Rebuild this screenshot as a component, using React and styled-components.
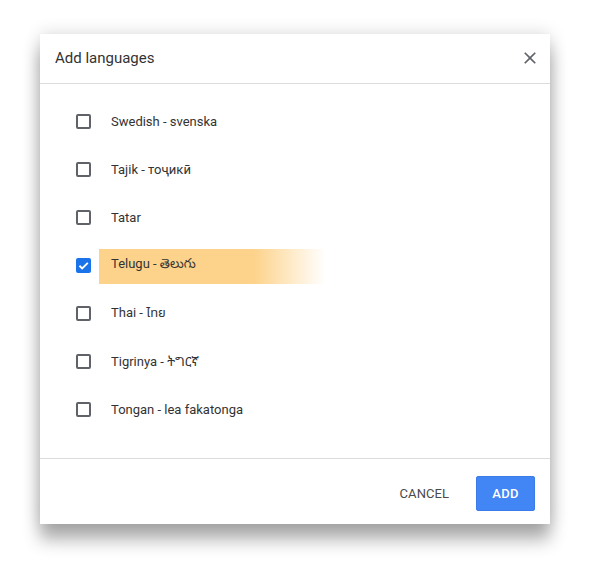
import React from "react";
import styled, { createGlobalStyle } from "styled-components";

const Global = createGlobalStyle`
  html, body { margin: 0; padding: 0; background: #fff; }
  body { font-family: Roboto, "Noto Sans", "Liberation Sans", sans-serif; }
`;

const Page = styled.div`
  width: 593px;
  height: 572px;
  padding: 34px 0 0 40px;
  box-sizing: border-box;
`;

const Dialog = styled.div`
  width: 510px;
  height: 490px;
  background: #fff;
  box-shadow: 0 0 16px rgba(0, 0, 0, 0.16), 0 16px 16px rgba(0, 0, 0, 0.3);
  display: flex;
  flex-direction: column;
`;

const Header = styled.div`
  height: 50px;
  box-sizing: border-box;
  border-bottom: 1px solid #dcdcdc;
  display: flex;
  align-items: center;
  justify-content: space-between;
  padding: 0 10px 2px 15px;
`;

const Title = styled.h2`
  margin: 0;
  font-size: 15px;
  font-weight: 400;
  color: #333;
`;

const CloseButton = styled.button`
  border: 0;
  background: none;
  padding: 0;
  width: 20px;
  height: 20px;
  display: flex;
  align-items: center;
  justify-content: center;
  color: #5f6368;
  cursor: pointer;
`;

const Body = styled.div`
  height: 374px;
  box-sizing: border-box;
  padding-top: 13px;
  display: flex;
  flex-direction: column;
`;

const Row = styled.label`
  height: 48px;
  display: flex;
  align-items: center;
  padding-left: 36px;
  gap: 8px;
`;

const Box = styled.span`
  width: 15px;
  height: 15px;
  box-sizing: border-box;
  border-radius: 2px;
  border: ${(p) => (p.$checked ? "0" : "2px solid #5f6368")};
  background: ${(p) => (p.$checked ? "#1a73e8" : "transparent")};
  display: flex;
  align-items: center;
  justify-content: center;
  flex-shrink: 0;
`;

const Label = styled.span`
  font-size: 13px;
  color: #333;
  padding-left: 12px;
  height: 35px;
  width: 226px;
  box-sizing: border-box;
  display: flex;
  align-items: center;
  margin-top: ${(p) => (p.$highlight ? "3px" : "0")};
  padding-bottom: ${(p) => (p.$highlight ? "3px" : "0")};
  background: ${(p) =>
    p.$highlight
      ? "linear-gradient(to right, #fdd38c 0%, #fdd38c 69%, rgba(253,211,140,0) 100%)"
      : "transparent"};
  font-family: Roboto, "Noto Sans", "Noto Sans Telugu", "Noto Sans Thai", "Noto Sans Ethiopic", sans-serif;
`;

const Footer = styled.div`
  flex: 1;
  border-top: 1px solid #dcdcdc;
  display: flex;
  justify-content: flex-end;
  align-items: flex-start;
  padding: 17px 15px 0 0;
  gap: 11px;
`;

const Button = styled.button`
  height: 35px;
  border: 0;
  border-radius: 3px;
  font-family: Roboto, "Liberation Sans", sans-serif;
  font-size: 13px;
  font-weight: ${(p) => (p.$primary ? 500 : 400)};
  letter-spacing: ${(p) => (p.$primary ? "0.4px" : "0.1px")};
  padding: 0 16px;
  cursor: pointer;
  background: ${(p) => (p.$primary ? "#4285f4" : "transparent")};
  color: ${(p) => (p.$primary ? "#fff" : "#4a4a4a")};
  box-shadow: ${(p) => (p.$primary ? "0 0 0 1px #3b7be8 inset" : "none")};
`;

const languages = [
  { name: "Swedish - svenska" },
  { name: "Tajik - тоҷикӣ" },
  { name: "Tatar" },
  { name: "Telugu - తెలుగు", checked: true },
  { name: "Thai - ไทย" },
  { name: "Tigrinya - ትግርኛ" },
  { name: "Tongan - lea fakatonga" },
];

export default function App() {
  return (
    <Page>
      <Global />
      <Dialog>
        <Header>
          <Title>Add languages</Title>
          <CloseButton aria-label="Close">
            <svg width="20" height="20" viewBox="0 0 24 24">
              <path
                fill="currentColor"
                d="M19 6.41L17.59 5 12 10.59 6.41 5 5 6.41 10.59 12 5 17.59 6.41 19 12 13.41 17.59 19 19 17.59 13.41 12z"
              />
            </svg>
          </CloseButton>
        </Header>
        <Body>
          {languages.map((l) => (
            <Row key={l.name}>
              <Box $checked={l.checked}>
                {l.checked && (
                  <svg width="13" height="13" viewBox="0 0 24 24">
                    <path
                      fill="none"
                      stroke="#fff"
                      strokeWidth="3.4"
                      d="M4.5 12.5l5 5L20 7"
                    />
                  </svg>
                )}
              </Box>
              <Label $highlight={l.checked}>{l.name}</Label>
            </Row>
          ))}
        </Body>
        <Footer>
          <Button>CANCEL</Button>
          <Button $primary>ADD</Button>
        </Footer>
      </Dialog>
    </Page>
  );
}
